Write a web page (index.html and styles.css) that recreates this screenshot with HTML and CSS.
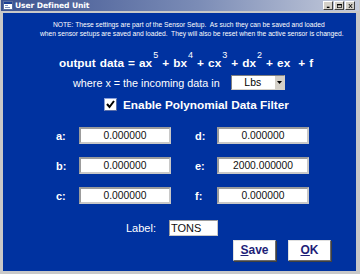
FILE: index.html
```html
<!DOCTYPE html>
<html lang="en">
<head>
  <meta charset="UTF-8" />
  <title>User Defined Unit</title>
  <link rel="stylesheet" href="styles.css">
</head>
<body>
  <div class="window">
    <!-- Title bar -->
    <div class="titlebar">
      <svg class="app-icon" width="10" height="9" viewBox="0 0 10 9">
        <rect x="0.5" y="0.5" width="9" height="8" fill="#ffffff" stroke="#5a6f9e"/>
        <rect x="1" y="1" width="8" height="2" fill="#1c3f94"/>
        <rect x="2" y="4" width="3" height="1" fill="#7f93c0"/>
        <rect x="2" y="6" width="5" height="1" fill="#7f93c0"/>
      </svg>
      <span class="title">User Defined Unit</span>
      <div class="title-buttons">
        <div class="tbtn"><svg width="7" height="6" viewBox="0 0 7 6"><rect x="1" y="4" width="4" height="2" fill="#000"/></svg></div>
        <div class="tbtn"><svg width="7" height="6" viewBox="0 0 7 6"><rect x="0.5" y="0.5" width="6" height="5" fill="none" stroke="#000"/><rect x="0" y="0" width="7" height="2" fill="#000"/></svg></div>
        <div class="tbtn"><svg width="7" height="6" viewBox="0 0 7 6"><path d="M1 0 L6 6 M6 0 L1 6" stroke="#000" stroke-width="1.4"/></svg></div>
      </div>
    </div>

    <div class="panel">
      <div class="note">
        <div class="note-line first">NOTE: These settings are part of the Sensor Setup.&nbsp; As such they can be saved and loaded</div>
        <div class="note-line second">when sensor setups are saved and loaded.&nbsp; They will also be reset when the active sensor is changed.</div>
      </div>

      <div class="equation">output data = ax<sup>5</sup> + bx<sup>4</sup> + cx<sup>3</sup> + dx<sup>2</sup> + ex&nbsp; + f</div>

      <div class="where-row">
        <span>where x = the incoming data in</span>
        <div class="select">
          <span class="select-value">Lbs</span>
          <div class="select-arrow">
            <svg width="5" height="3" viewBox="0 0 5 3"><path d="M0 0 H5 L2.5 3 Z" fill="#000"/></svg>
          </div>
        </div>
      </div>

      <div class="check-row">
        <div class="checkbox">
          <svg width="11" height="11" viewBox="0 0 11 11"><path d="M2 5 L4.5 8 L9 2" fill="none" stroke="#000" stroke-width="2"/></svg>
        </div>
        <span>Enable Polynomial Data Filter</span>
      </div>

      <div class="coefs">
        <span class="coef-label">a:</span><div class="field">0.000000</div>
        <span class="coef-label right">d:</span><div class="field">0.000000</div>
        <span class="coef-label">b:</span><div class="field">0.000000</div>
        <span class="coef-label right">e:</span><div class="field">2000.000000</div>
        <span class="coef-label">c:</span><div class="field">0.000000</div>
        <span class="coef-label right">f:</span><div class="field">0.000000</div>
      </div>

      <div class="label-row">
        <span>Label:</span>
        <div class="field label-field">TONS</div>
      </div>

      <div class="button-row">
        <div class="btn"><u>S</u>ave</div>
        <div class="btn"><u>O</u>K</div>
      </div>
    </div>
  </div>
</body>
</html>
```

FILE: styles.css
```css
body {
  margin: 0;
  padding: 0;
  background: #ffffff;
  font-family: 'Liberation Sans', Arial, sans-serif;
}

.window {
  width: 360px;
  height: 274px;
  box-sizing: border-box;
  background: #c8c8c8;
  padding: 0 4px 3px 3px;
  display: flex;
  flex-direction: column;
}

.titlebar {
  height: 11px;
  margin: 0 -3px 2px -2px;
  display: flex;
  align-items: center;
  padding: 0 4px 0 2px;
  background: linear-gradient(to right, #3c5290, #7b8cb6 55%, #c6ccdc);
}

.app-icon {
  margin-right: 2px;
}

.title {
  font-family: 'DejaVu Sans', sans-serif;
  font-weight: bold;
  font-size: 7.6px;
  color: #ffffff;
  letter-spacing: -0.1px;
}

.title-buttons {
  margin-left: auto;
  display: flex;
  gap: 1px;
}

.tbtn {
  width: 8px;
  height: 7px;
  background: #d4d0c8;
  border: 1px solid;
  border-color: #ffffff #404040 #404040 #ffffff;
  display: flex;
  align-items: center;
  justify-content: center;
}

.tbtn svg {
  width: 5px;
  height: 4px;
}

.panel {
  flex: 1;
  background: #0032a0;
  color: #ffffff;
  display: flex;
  flex-direction: column;
}

.note {
  padding-top: 7px;
  font-size: 6.7px;
  line-height: 9px;
  white-space: nowrap;
}

.note-line.first {
  padding-left: 50px;
}

.note-line.second {
  padding-left: 37px;
}

.equation {
  margin-top: 17px;
  padding-left: 56px;
  font-weight: bold;
  font-size: 11.8px;
  line-height: 16px;
  word-spacing: 0.8px;
  white-space: nowrap;
}

.equation sup {
  font-size: 9px;
  font-weight: normal;
  line-height: 0;
  vertical-align: 9px;
  margin-left: 1px;
}

.where-row {
  margin-top: 4px;
  padding-left: 70px;
  display: flex;
  align-items: center;
  gap: 11px;
  font-size: 10.8px;
  height: 15px;
}

.select {
  width: 54px;
  height: 15px;
  box-sizing: border-box;
  background: #ffffff;
  border: 1px solid;
  border-color: #808080 #d4d0c8 #d4d0c8 #808080;
  display: flex;
  color: #000000;
}

.select-value {
  flex: 1;
  text-align: center;
  font-size: 10.4px;
  line-height: 13px;
}

.select-arrow {
  width: 9px;
  background: #d4d0c8;
  border-left: 1px solid #ffffff;
  display: flex;
  align-items: center;
  justify-content: center;
}

.check-row {
  margin-top: 8px;
  padding-left: 101px;
  display: flex;
  align-items: center;
  gap: 6px;
  font-weight: bold;
  font-size: 11.8px;
  height: 13px;
}

.checkbox {
  width: 13px;
  height: 13px;
  box-sizing: border-box;
  background: #ffffff;
  border: 1px solid;
  border-color: #8aa0d8 #5a6ea8 #5a6ea8 #8aa0d8;
  display: flex;
  align-items: center;
  justify-content: center;
}

.coefs {
  margin-top: 16px;
  padding-left: 53px;
  display: grid;
  grid-template-columns: 23px 92px 46px 92px;
  grid-auto-rows: 17px;
  row-gap: 13px;
  align-items: center;
}

.coef-label {
  font-weight: bold;
  font-size: 11px;
}

.coef-label.right {
  padding-left: 24px;
}

.field {
  height: 17px;
  box-sizing: border-box;
  background: #ffffff;
  border: 2px solid;
  border-color: #9c9c9c #c8c8c8 #c8c8c8 #9c9c9c;
  color: #101010;
  font-size: 10.3px;
  line-height: 13px;
  text-align: center;
}

.label-row {
  margin-top: 16px;
  padding-left: 123px;
  display: flex;
  align-items: center;
  gap: 13px;
  font-size: 11px;
  height: 16px;
}

.field.label-field {
  width: 49px;
  height: 16px;
  border-width: 1px;
  text-align: left;
  font-size: 11px;
  line-height: 14px;
  padding-left: 1px;
}

.button-row {
  margin-top: 4px;
  padding-right: 25px;
  display: flex;
  justify-content: flex-end;
  gap: 12px;
}

.btn {
  width: 43px;
  height: 21px;
  box-sizing: border-box;
  background: #ffffff;
  border: 1px solid;
  border-color: #e0e0e0 #6c6c6c #6c6c6c #e0e0e0;
  box-shadow: 1px 1px 0 #404040;
  color: #1e1e78;
  font-weight: bold;
  font-size: 12px;
  line-height: 19px;
  text-align: center;
}
```
